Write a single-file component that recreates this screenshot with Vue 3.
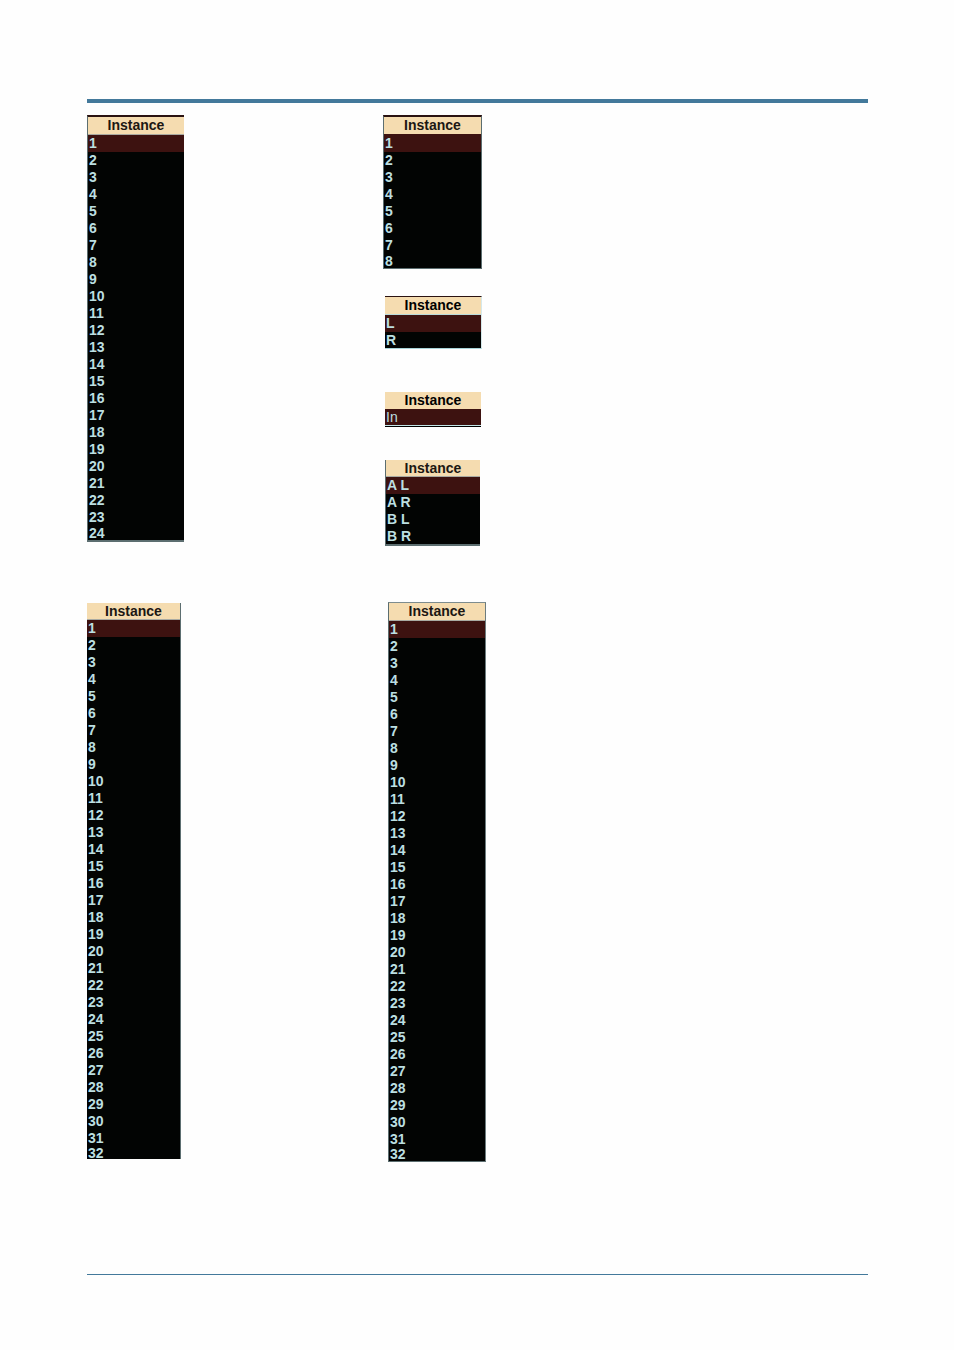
<script setup>
const range = (n) => Array.from({ length: n }, (_, i) => String(i + 1))

const columns = [
  {
    name: 'left',
    tables: [
      { id: 'ch24', rows: range(24) },
      { id: 'ch32', rows: range(32) },
    ],
  },
  {
    name: 'right',
    tables: [
      { id: 'ch8', rows: range(8) },
      { id: 'stereo', rows: ['L', 'R'] },
      { id: 'input', rows: ['In'] },
      { id: 'pairs', rows: ['A L', 'A R', 'B L', 'B R'] },
      { id: 'bus32', rows: range(32) },
    ],
  },
]
</script>

<template>
  <div class="page">
    <header class="top-rule"></header>
    <main class="columns">
      <section v-for="column in columns" :key="column.name" class="column">
        <table v-for="table in column.tables" :key="table.id" :class="['instances', table.id]">
          <thead>
            <tr><th scope="col">Instance</th></tr>
          </thead>
          <tbody>
            <tr v-for="(row, i) in table.rows" :key="row" :class="{ selected: i === 0 }">
              <td>{{ row }}</td>
            </tr>
          </tbody>
        </table>
      </section>
    </main>
    <footer class="bottom-rule"></footer>
  </div>
</template>

<style>
body {
  margin: 0;
  background: #fefefe;
}
</style>

<style scoped>
.page {
  padding: 99px 86px 75px 87px;
  font-family: "Liberation Sans", Arial, sans-serif;
  font-size: 14px;
  font-weight: bold;
}
.top-rule {
  border-top: 4px solid #43799b;
  margin-bottom: 12px;
}
.bottom-rule {
  border-top: 1px solid #43799b;
  margin-top: 112px;
}
.columns {
  display: grid;
  grid-template-columns: 296px 1fr;
}
.column {
  display: flex;
  flex-direction: column;
  align-items: flex-start;
}
.instances {
  box-sizing: border-box;
  border: 0 solid #5c6e70;
  border-spacing: 0;
  background: #020403;
  color: #bcdfe1;
}
th,
td {
  padding: 0;
  line-height: 17px;
}
th {
  background: #f5dcb0;
  color: #1c1713;
  text-align: center;
  border-bottom: 0 solid #a9aaa2;
}
td {
  padding-left: 1px;
  text-align: left;
}
.selected td {
  background: #3d1210;
}

.ch24 {
  width: 97px;
  border-width: 2px 0 2px 1px;
  border-top-color: #2a1211;
}
.ch24 th {
  border-bottom-width: 1px;
}
.ch24 tbody tr:last-child td {
  line-height: 14px;
}

.ch32 {
  width: 94px;
  margin-top: 61px;
  border-width: 0 1px 0 0;
}
.ch32 th {
  line-height: 16px;
  border-bottom-width: 1px;
}
.ch32 tbody tr:last-child td {
  line-height: 12px;
}

.ch8 {
  width: 99px;
  border-width: 2px 1px 1px 1px;
  border-top-color: #2a1211;
}
.ch8 th {
  border-bottom: 1px solid #3d1210;
}
.ch8 tbody tr:last-child td {
  line-height: 14px;
}

.stereo {
  width: 97px;
  margin: 27px 0 0 2px;
  border-width: 1px 1px 1px 0;
  border-color: #2a1211 #d5e8ea #a8d4d8 #a8d4d8;
}
.stereo th {
  color: #000;
  border-bottom: 1px solid #b9dcdc;
}
.stereo tbody tr:last-child td {
  line-height: 16px;
}

.input {
  width: 96px;
  margin: 43px 0 0 2px;
  border-bottom: 1px solid #000;
}
.input th {
  color: #000;
}
.input td {
  font-weight: normal;
  line-height: 16px;
  border-bottom: 1px solid #c3e6e8;
}

.pairs {
  width: 95px;
  margin: 33px 0 0 2px;
  border-width: 0 0 2px 1px;
}
.pairs th {
  line-height: 16px;
  border-bottom-width: 1px;
}
.pairs tbody tr:last-child td {
  line-height: 16px;
}

.bus32 {
  width: 98px;
  margin: 56px 0 0 5px;
  border-width: 1px;
  border-color: #7d8c8e #6d7c7e #5c6e70 #5c6e70;
}
.bus32 th {
  border-bottom-width: 1px;
}
.bus32 tbody tr:last-child td {
  line-height: 13px;
}
</style>
